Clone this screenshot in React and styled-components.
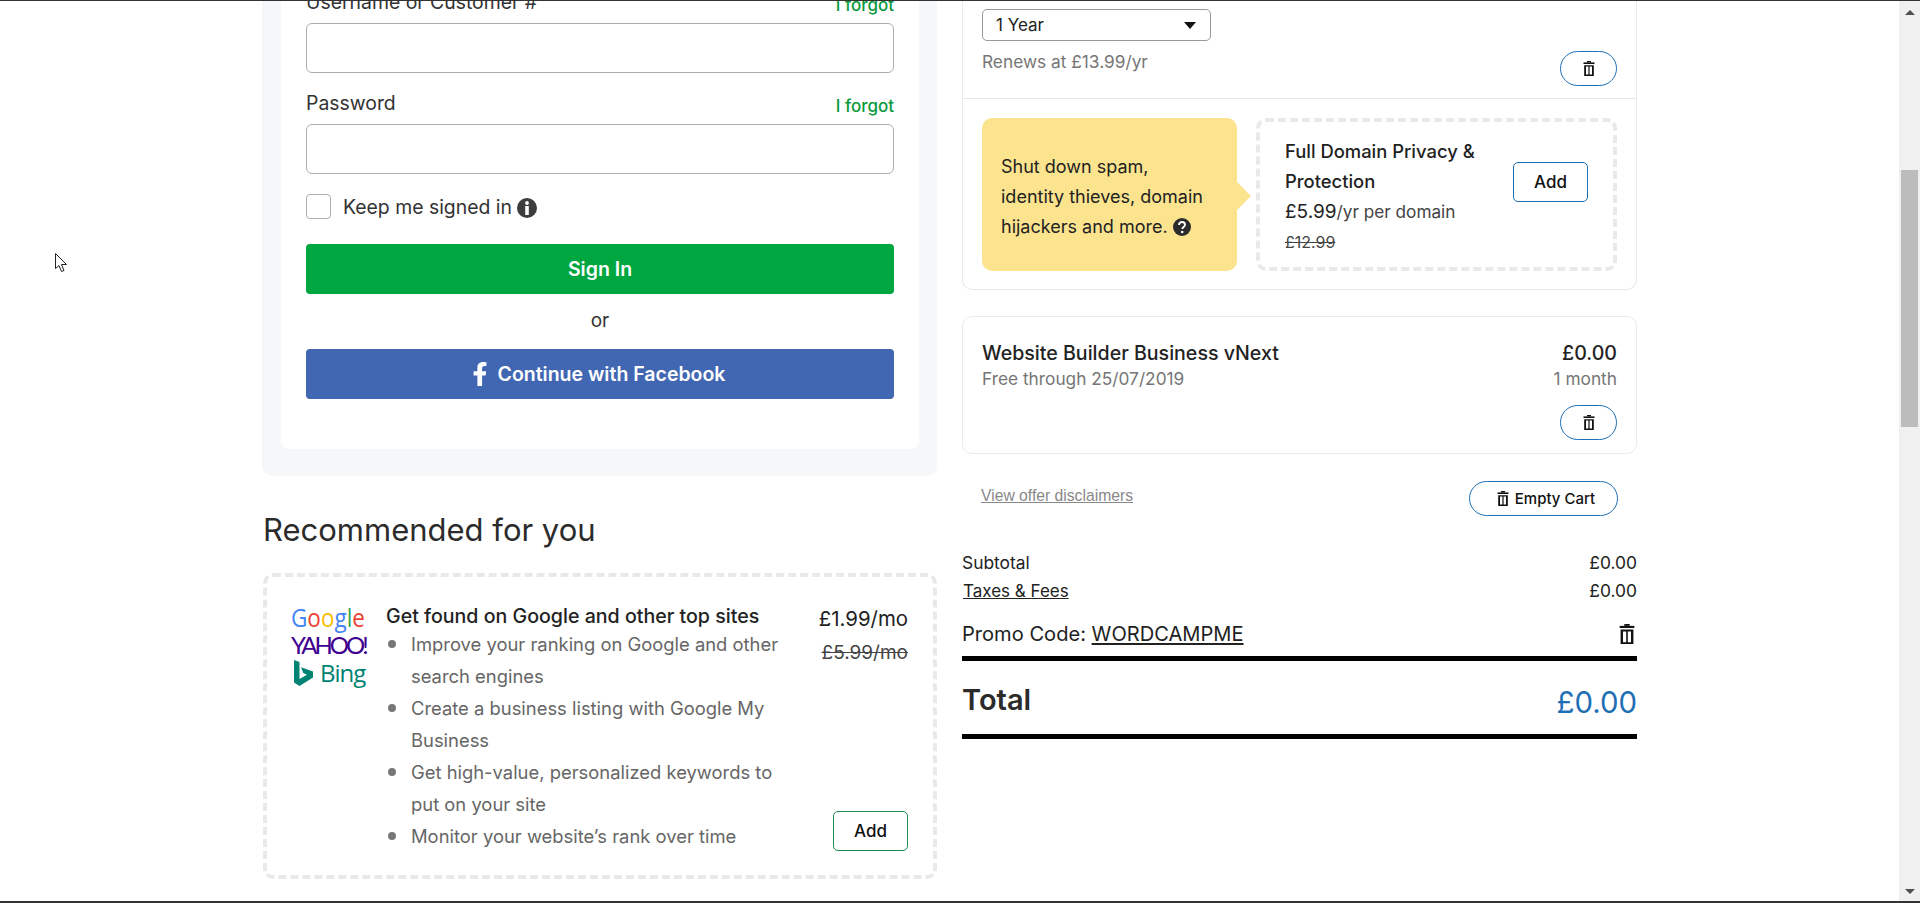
import React from 'react'
import styled,{createGlobalStyle} from 'styled-components'
import {FaFacebookF} from 'react-icons/fa'

const GlobalStyle = createGlobalStyle`
    html,body{
        margin:0;
        padding:0;
        background:#fff;
        overflow:hidden;
    }
    body{
        font-family:"Inter","Open Sans",sans-serif;
        color:#2b2b2b;
    }
    *{
        box-sizing:border-box;
    }
`

const Shell = styled.div`
    height:903px;
    display:flex;
    overflow:hidden;
    border-top:1px solid #333;
    border-bottom:2px solid #333;
`

const Page = styled.div`
    flex:1;
    min-width:0;
    overflow:hidden;
`

const Columns = styled.div`
    display:flex;
    gap:25px;
    margin-top:-61px;
    padding-left:262px;
`

const Column = styled.div`
    width:675px;
    flex-shrink:0;
`

const Panel = styled.div`
    background:#f5f7f8;
    border-radius:0 0 10px 10px;
    padding:0 18px 27px 19px;
`

const LoginCard = styled.div`
    background:#fff;
    border-radius:0 0 8px 8px;
    padding:50px 25px 50px;
`

const Field = styled.div`
    margin-bottom:18px;
`

const LabelRow = styled.div`
    display:flex;
    justify-content:space-between;
    align-items:flex-end;
    margin-bottom:6px;
`

const Label = styled.span`
    font-size:19.4px;
    line-height:24px;
    padding-bottom:3px;
    color:#333;
`

const Forgot = styled.a`
    font-size:17px;
    font-weight:500;
    line-height:24px;
    color:#0a9a3c;
`

const Input = styled.input`
    display:block;
    width:100%;
    height:50px;
    border:1px solid #a9aeb1;
    border-radius:6px;
    background:#fff;
`

const CheckRow = styled.label`
    display:flex;
    align-items:center;
    height:25px;
    margin-top:20px;
    font-size:19.4px;
    color:#333;
`

const Check = styled.span`
    width:25px;
    height:25px;
    border:1px solid #a9aeb1;
    border-radius:4px;
    margin-right:12px;
`

const InfoIcon = styled.svg`
    margin:2px 0 0 5px;
    flex-shrink:0;
`

const FullButton = styled.button`
    display:flex;
    align-items:center;
    justify-content:center;
    gap:6px;
    width:100%;
    height:50px;
    border:0;
    border-radius:4px;
    color:#fff;
    font:600 19.5px "Inter",sans-serif;
    background:${props=>props.$bg};
`

const SignIn = styled(FullButton)`
    margin-top:25px;
`

const FacebookButton = styled(FullButton)`
    padding:0 7px 0 0;
`

const OrText = styled.div`
    text-align:center;
    font-size:19px;
    line-height:24px;
    margin:15px 0 16px;
    color:#333;
`

const Heading = styled.h2`
    margin:34px 0 23px 1px;
    font-size:31px;
    line-height:40px;
    font-weight:400;
    color:#2b2b2b;
`

const Dashed = styled.div`
    border:4px dashed #e8e9ea;
    border-radius:10px;
`

const RecBox = styled(Dashed)`
    margin-left:1px;
    padding:27px 25px 23px 24px;
    display:flex;
`

const Logos = styled.div`
    width:95px;
    flex-shrink:0;
`

const GoogleLogo = styled.div`
    font:500 25px/26px "Open Sans",sans-serif;
    height:29px;
    transform:scaleX(.9);
    transform-origin:left;
    span:nth-child(1),span:nth-child(4){color:#4285f4;}
    span:nth-child(2),span:nth-child(6){color:#ea4335;}
    span:nth-child(3){color:#fbbc05;}
    span:nth-child(5){color:#34a853;}
`

const YahooLogo = styled.div`
    font:400 24px/24px "Lato",sans-serif;
    letter-spacing:-3px;
    color:#400090;
`

const BingLogo = styled.div`
    display:flex;
    align-items:center;
    gap:6px;
    font:400 24px/28px "Open Sans",sans-serif;
    color:#008373;
    margin-left:3px;
    margin-top:2px;
    letter-spacing:-1px;
`

const RecBody = styled.div`
    flex:1;
`

const RecTitle = styled.div`
    font-size:19.6px;
    font-weight:500;
    line-height:24px;
    color:#222;
`

const Bullets = styled.ul`
    list-style:none;
    margin:0;
    padding:0;
    width:400px;
`

const Bullet = styled.li`
    display:flex;
    gap:15px;
    padding-left:2px;
    font-size:18.4px;
    line-height:32px;
    color:#666;

    &::before{
        content:'';
        flex-shrink:0;
        width:8px;
        height:8px;
        margin-top:12px;
        border-radius:50%;
        background:#777;
    }
`

const RecSide = styled.div`
    display:flex;
    flex-direction:column;
    align-items:flex-end;
    padding-top:1px;
`

const Price = styled.div`
    font-size:20.4px;
    line-height:28px;
    color:#222;
`

const OldPrice = styled(Price)`
    margin-top:6px;
    font-size:19px;
    text-decoration:line-through;
    color:#444;
`

const AddButton = styled.button`
    width:75px;
    height:40px;
    flex-shrink:0;
    background:#fff;
    border:1px solid ${props=>props.$color};
    border-radius:5px;
    font:500 17px "Inter",sans-serif;
    color:#111;
`

const RecAdd = styled(AddButton)`
    margin-top:auto;
    margin-bottom:1px;
`

const Card = styled.div`
    border:1px solid #e8eaeb;
    border-radius:10px;
`

const TopCard = styled(Card)`
    border-top:0;
    border-radius:0 0 10px 10px;
`

const TermSection = styled.div`
    display:flex;
    justify-content:space-between;
    align-items:flex-end;
    padding:69px 19px 12px;
    border-bottom:1px solid #e5e6e7;
`

const TermInfo = styled.div`
    align-self:flex-start;
    padding-bottom:12px;
`

const Select = styled.div`
    display:flex;
    align-items:center;
    justify-content:space-between;
    width:229px;
    height:32px;
    padding:0 14px 0 13px;
    border:1px solid #999;
    border-radius:5px;
    font-size:17px;
    color:#222;

    &::after{
        content:'';
        border-top:7px solid #111;
        border-left:6px solid transparent;
        border-right:6px solid transparent;
    }
`

const Muted = styled.div`
    font-size:17.3px;
    line-height:24px;
    color:#767676;
`

const Renews = styled(Muted)`
    margin-top:9px;
`

const Pill = styled.button`
    display:flex;
    align-items:center;
    justify-content:center;
    gap:6px;
    height:35px;
    width:${props=>props.$w}px;
    flex-shrink:0;
    padding:0;
    background:#fff;
    border:1px solid #1f6fb5;
    border-radius:18px;
    font:500 15px "Inter",sans-serif;
    color:#111;
`

const EmptyCartPill = styled(Pill)`
    padding-left:5px;
`

const OfferSection = styled.div`
    display:flex;
    gap:19px;
    padding:19px 19px 18px;
`

const Tip = styled.div`
    position:relative;
    width:255px;
    height:153px;
    flex-shrink:0;
    padding:34px 0 0 19px;
    background:#fce48f;
    border-radius:10px;
    font-size:18px;
    line-height:30px;
    color:#222;

    &::after{
        content:'';
        position:absolute;
        left:100%;
        top:64px;
        border-left:14px solid #fce48f;
        border-top:14px solid transparent;
        border-bottom:14px solid transparent;
    }
`

const HelpIcon = styled.svg`
    vertical-align:-3px;
    margin-left:5px;
`

const OfferBox = styled(Dashed)`
    flex:1;
    display:flex;
    justify-content:space-between;
    align-items:flex-start;
    padding:15px 25px 0 25px;
`

const OfferText = styled.div`
    line-height:30px;
    font-size:18.4px;
    color:#222;
`

const OfferTitle = styled.div`
    font-weight:500;
    width:200px;
    margin:-1px 0 1px;
`

const OfferPrice = styled.div`
    font-size:19px;

    small{
        font-size:17.2px;
        color:#444;
    }
`

const OfferOld = styled.div`
    font-size:16px;
    text-decoration:line-through;
    color:#444;
`

const OfferAdd = styled(AddButton)`
    margin-top:25px;
`

const ProductCard = styled(Card)`
    margin-top:26px;
    padding:22px 19px 13px;
`

const ProductRow = styled.div`
    display:flex;
    justify-content:space-between;
`

const ProductName = styled.div`
    font-size:19.6px;
    font-weight:500;
    line-height:28px;
    color:#222;
`

const ProductFoot = styled.div`
    display:flex;
    justify-content:flex-end;
    margin-top:14px;
`

const ActionsRow = styled.div`
    display:flex;
    justify-content:space-between;
    align-items:center;
    margin-top:27px;
    padding:0 19px;
`

const Disclaimers = styled.a`
    font:400 15.700px "Liberation Sans",sans-serif;
    color:#888;
    text-decoration:underline;
    margin-bottom:5px;
`

const Summary = styled.div`
    margin-top:33px;
`

const SummaryRow = styled.div`
    display:flex;
    justify-content:space-between;
    font-size:17.4px;
    line-height:28px;
    color:#222;
`

const Underlined = styled.span`
    text-decoration:underline;
`

const TaxesLink = styled(Underlined)`
    font-size:17px;
    margin-left:1px;
`

const PromoRow = styled.div`
    display:flex;
    justify-content:space-between;
    align-items:center;
    margin-top:14px;
    padding:0 2px 7px 0;
    font-size:20.1px;
    line-height:30px;
    color:#222;
    border-bottom:5px solid #000;
`

const TotalRow = styled.div`
    display:flex;
    justify-content:space-between;
    align-items:center;
    height:78px;
    padding-top:3px;
    border-bottom:5px solid #000;
`

const TotalLabel = styled.div`
    font-size:29px;
    font-weight:600;
    color:#2b2b2b;
`

const TotalValue = styled.div`
    font-size:29.4px;
    margin-top:6px;
    color:#1f6fb5;
`

const Scrollbar = styled.div`
    width:21px;
    flex-shrink:0;
    display:flex;
    flex-direction:column;
    align-items:center;
    justify-content:space-between;
    background:#f0f0f0;
    padding:9px 0 7px;
    position:relative;
`

const ScrollArrow = styled.span`
    border-left:5px solid transparent;
    border-right:5px solid transparent;
    ${props=>props.$down ? 'border-top:5px solid #505050;' : 'border-bottom:5px solid #505050;'}
`

const ScrollThumb = styled.div`
    position:absolute;
    top:169px;
    left:2px;
    width:17px;
    height:257px;
    background:#bcbcbc;
`

const Cursor = styled.svg`
    position:absolute;
    left:55px;
    top:253px;
`

const Trash = ({size=15}) => (
    <svg width={size*.8} height={size} viewBox="0 0 12 15" fill="#111">
        <rect x="4" y="0" width="4" height="1.4" />
        <rect x="0.5" y="1.4" width="11" height="1.6" />
        <path fillRule="evenodd" d="M1.2 4.200h9.600V15H1.200zM3 5.600v8h2.400v-8zM6.600 5.600v8H9v-8z" />
    </svg>
)

const Info = () => (
    <InfoIcon width="20" height="20" viewBox="0 0 20 20">
        <circle cx="10" cy="10" r="10" fill="#3d3d3d" />
        <circle cx="10" cy="5" r="1.900" fill="#fff" />
        <rect x="8.200" y="8" width="3.600" height="9" fill="#fff" />
    </InfoIcon>
)

const Help = () => (
    <HelpIcon width="18" height="18" viewBox="0 0 18 18">
        <circle cx="9" cy="9" r="9" fill="#2b2b2b" />
        <path d="M6 7c0-2 1.400-3 3.100-3S12 5 12 6.700c0 2.300-2.700 2.200-2.700 4.300" fill="none" stroke="#fff" strokeWidth="1.900" />
        <circle cx="9.200" cy="14" r="1.300" fill="#fff" />
    </HelpIcon>
)

const BingMark = () => (
    <svg width="20" height="26" viewBox="0 0 20 26">
        <path d="M0 0l5.500 2v17l7.500-4.300-3.700-1.700-2.300-5.700L19 11.500v6L5.500 26 0 22.500z" fill="#008373" />
    </svg>
)

const recommendations = [
    'Improve your ranking on Google and other search engines',
    'Create a business listing with Google My Business',
    'Get high-value, personalized keywords to put on your site',
    'Monitor your website’s rank over time',
]

const App = () => {
    return (
        <Shell>
            <GlobalStyle />
            <Page>
                <Columns>
                    <Column>
                        <Panel>
                            <LoginCard>
                                <Field>
                                    <LabelRow>
                                        <Label>Username or Customer #</Label>
                                        <Forgot>I forgot</Forgot>
                                    </LabelRow>
                                    <Input />
                                </Field>
                                <Field>
                                    <LabelRow>
                                        <Label>Password</Label>
                                        <Forgot>I forgot</Forgot>
                                    </LabelRow>
                                    <Input type="password" />
                                </Field>
                                <CheckRow>
                                    <Check />
                                    Keep me signed in
                                    <Info />
                                </CheckRow>
                                <SignIn $bg="#00a63f">Sign In</SignIn>
                                <OrText>or</OrText>
                                <FacebookButton $bg="#4267b2"><FaFacebookF size={24} />Continue with Facebook</FacebookButton>
                            </LoginCard>
                        </Panel>
                        <Heading>Recommended for you</Heading>
                        <RecBox>
                            <Logos>
                                <GoogleLogo>
                                    <span>G</span><span>o</span><span>o</span><span>g</span><span>l</span><span>e</span>
                                </GoogleLogo>
                                <YahooLogo>YAHOO!</YahooLogo>
                                <BingLogo><BingMark />Bing</BingLogo>
                            </Logos>
                            <RecBody>
                                <RecTitle>Get found on Google and other top sites</RecTitle>
                                <Bullets>
                                    {recommendations.map((text,i)=>
                                        <Bullet key={i}><span>{text}</span></Bullet>
                                    )}
                                </Bullets>
                            </RecBody>
                            <RecSide>
                                <Price>£1.99/mo</Price>
                                <OldPrice>£5.99/mo</OldPrice>
                                <RecAdd $color="#1b8a4f">Add</RecAdd>
                            </RecSide>
                        </RecBox>
                    </Column>
                    <Column>
                        <TopCard>
                            <TermSection>
                                <TermInfo>
                                    <Select>1 Year</Select>
                                    <Renews>Renews at £13.99/yr</Renews>
                                </TermInfo>
                                <Pill $w={57}><Trash /></Pill>
                            </TermSection>
                            <OfferSection>
                                <Tip>
                                    Shut down spam,<br />identity thieves, domain<br />hijackers and more.<Help />
                                </Tip>
                                <OfferBox>
                                    <OfferText>
                                        <OfferTitle>Full Domain Privacy &amp; Protection</OfferTitle>
                                        <OfferPrice>£5.99<small>/yr per domain</small></OfferPrice>
                                        <OfferOld>£12.99</OfferOld>
                                    </OfferText>
                                    <OfferAdd $color="#1f6fb5">Add</OfferAdd>
                                </OfferBox>
                            </OfferSection>
                        </TopCard>
                        <ProductCard>
                            <ProductRow>
                                <ProductName>Website Builder Business vNext</ProductName>
                                <ProductName>£0.00</ProductName>
                            </ProductRow>
                            <ProductRow>
                                <Muted>Free through 25/07/2019</Muted>
                                <Muted>1 month</Muted>
                            </ProductRow>
                            <ProductFoot>
                                <Pill $w={57}><Trash /></Pill>
                            </ProductFoot>
                        </ProductCard>
                        <ActionsRow>
                            <Disclaimers>View offer disclaimers</Disclaimers>
                            <EmptyCartPill $w={149}><Trash />Empty Cart</EmptyCartPill>
                        </ActionsRow>
                        <Summary>
                            <SummaryRow><span>Subtotal</span><span>£0.00</span></SummaryRow>
                            <SummaryRow><TaxesLink>Taxes &amp; Fees</TaxesLink><span>£0.00</span></SummaryRow>
                            <PromoRow>
                                <span>Promo Code: <Underlined>WORDCAMPME</Underlined></span>
                                <Trash size={20} />
                            </PromoRow>
                            <TotalRow>
                                <TotalLabel>Total</TotalLabel>
                                <TotalValue>£0.00</TotalValue>
                            </TotalRow>
                        </Summary>
                    </Column>
                </Columns>
            </Page>
            <Scrollbar>
                <ScrollArrow />
                <ScrollThumb />
                <ScrollArrow $down />
            </Scrollbar>
            <Cursor width="13" height="20" viewBox="0 0 13 20">
                <path d="M.5.500v15l3.500-3 2.500 6 2.500-1-2.500-6h5z" fill="#fff" stroke="#222" strokeWidth="1" />
            </Cursor>
        </Shell>
    )
}

export default App
